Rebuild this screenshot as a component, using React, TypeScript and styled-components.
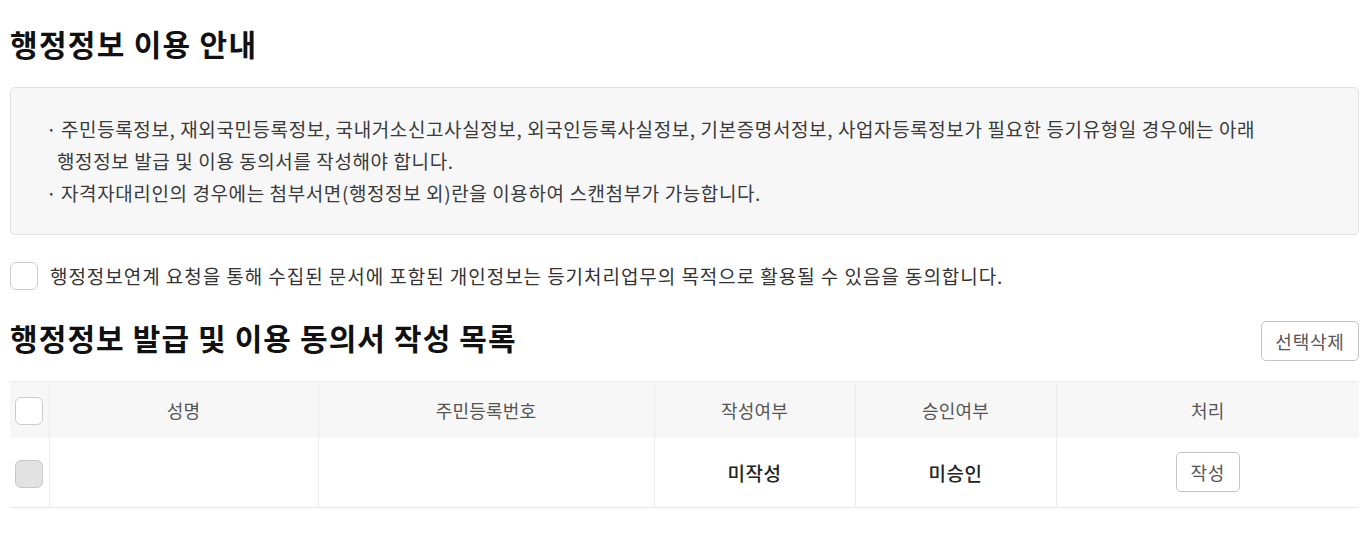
import React, { useState } from 'react'
import styled, { createGlobalStyle } from 'styled-components'

const GlobalStyle = createGlobalStyle`
  html, body {
    margin: 0;
    padding: 0;
    background: #ffffff;
  }
  body {
    font-family: 'Noto Sans CJK KR', 'Noto Sans', sans-serif;
    color: #333333;
  }
  * {
    box-sizing: border-box;
  }
`

const rows = [{ name: '', rrn: '', written: '미작성', approved: '미승인' }]

function App() {
  const [agree, setAgree] = useState(false)
  const [allChecked, setAllChecked] = useState(false)

  return (
    <Page>
      <GlobalStyle />
      <PageTitle>행정정보 이용 안내</PageTitle>
      <InfoBox>
        <InfoList>
          <InfoItem>
            주민등록정보, 재외국민등록정보, 국내거소신고사실정보, 외국인등록사실정보, 기본증명서정보, 사업자등록정보가 필요한 등기유형일 경우에는 아래
            <br />
            행정정보 발급 및 이용 동의서를 작성해야 합니다.
          </InfoItem>
          <InfoItem>자격자대리인의 경우에는 첨부서면(행정정보 외)란을 이용하여 스캔첨부가 가능합니다.</InfoItem>
        </InfoList>
      </InfoBox>

      <AgreeRow onClick={() => setAgree(!agree)}>
        <CheckBox $checked={agree} />
        <AgreeText>행정정보연계 요청을 통해 수집된 문서에 포함된 개인정보는 등기처리업무의 목적으로 활용될 수 있음을 동의합니다.</AgreeText>
      </AgreeRow>

      <SectionHeader>
        <SectionTitle>행정정보 발급 및 이용 동의서 작성 목록</SectionTitle>
        <OutlineButton $width={98}>선택삭제</OutlineButton>
      </SectionHeader>

      <Table>
        <colgroup>
          <col style={{ width: 39 }} />
          <col style={{ width: 269 }} />
          <col style={{ width: 336 }} />
          <col style={{ width: 201 }} />
          <col style={{ width: 201 }} />
          <col />
        </colgroup>
        <thead>
          <tr>
            <HeadCell>
              <CheckBox $checked={allChecked} onClick={() => setAllChecked(!allChecked)} />
            </HeadCell>
            <HeadCell>성명</HeadCell>
            <HeadCell>주민등록번호</HeadCell>
            <HeadCell>작성여부</HeadCell>
            <HeadCell>승인여부</HeadCell>
            <HeadCell>처리</HeadCell>
          </tr>
        </thead>
        <tbody>
          {rows.map((row, i) => (
            <tr key={i}>
              <BodyCell>
                <CheckBox $disabled />
              </BodyCell>
              <BodyCell>{row.name}</BodyCell>
              <BodyCell>{row.rrn}</BodyCell>
              <BodyCell $strong>{row.written}</BodyCell>
              <BodyCell $strong>{row.approved}</BodyCell>
              <BodyCell>
                <OutlineButton $width={64}>작성</OutlineButton>
              </BodyCell>
            </tr>
          ))}
        </tbody>
      </Table>
    </Page>
  )
}

export default App

const Page = styled.div`
  width: 100%;
  padding: 23px 13px 40px 10px;
  display: flex;
  flex-direction: column;
`

const PageTitle = styled.h2`
  margin: 0;
  font-size: 30px;
  line-height: 40px;
  font-weight: 700;
  color: #111111;
  letter-spacing: 1.3px;
`

const InfoBox = styled.div`
  margin-top: 24px;
  background: #f7f7f7;
  border: 1px solid #e2e2e2;
  border-radius: 5px;
  padding: 25px 20px 25px 35px;
`

const InfoList = styled.ul`
  margin: 0;
  padding: 0;
  list-style: none;
`

const InfoItem = styled.li`
  padding-left: 11px;
  font-size: 19px;
  line-height: 32px;
  color: #3a3a3a;
  letter-spacing: 0.6px;

  &::before {
    content: '·';
    display: inline-block;
    width: 15px;
    margin-left: -11px;
  }
`

const AgreeRow = styled.label`
  margin-top: 27px;
  display: flex;
  align-items: center;
  gap: 12px;
  cursor: pointer;
`

const CheckBox = styled.span<{ $checked?: boolean; $disabled?: boolean }>`
  display: inline-block;
  flex: none;
  width: 28px;
  height: 28px;
  border-radius: 6px;
  border: 1.5px solid ${({ $disabled }) => ($disabled ? '#c9c9c9' : '#cccccc')};
  background: ${({ $checked, $disabled }) => ($disabled ? '#e2e2e2' : $checked ? '#2f6fd6' : '#ffffff')};
  vertical-align: middle;
  cursor: ${({ $disabled }) => ($disabled ? 'default' : 'pointer')};
`

const AgreeText = styled.span`
  font-size: 19px;
  line-height: 28px;
  color: #333333;
  letter-spacing: 0.95px;
`

const SectionHeader = styled.div`
  margin-top: 31px;
  display: flex;
  justify-content: space-between;
  align-items: flex-start;
`

const SectionTitle = styled.h3`
  margin: 0;
  font-size: 30px;
  line-height: 32px;
  font-weight: 700;
  color: #111111;
  letter-spacing: 1.1px;
`

const OutlineButton = styled.button<{ $width: number }>`
  width: ${({ $width }) => $width}px;
  height: 40px;
  padding: 0;
  border: 1px solid #c4c4c4;
  border-radius: 5px;
  background: #ffffff;
  font-family: inherit;
  font-size: 18px;
  letter-spacing: 0.8px;
  color: #555555;
  cursor: pointer;
`

const Table = styled.table`
  margin-top: 20px;
  width: 100%;
  table-layout: fixed;
  border-collapse: collapse;
  border-top: 1px solid #ececec;
  border-bottom: 1px solid #e6e6e6;
`

const HeadCell = styled.th`
  height: 56px;
  padding: 0;
  background: #f7f7f7;
  font-size: 18px;
  font-weight: 400;
  letter-spacing: 0.2px;
  color: #555555;
  text-align: center;
  vertical-align: middle;

  & + & {
    border-left: 1px solid #ececec;
  }
`

const BodyCell = styled.td<{ $strong?: boolean }>`
  height: 70px;
  padding: 0;
  font-size: 19px;
  letter-spacing: 0.6px;
  font-weight: ${({ $strong }) => ($strong ? 500 : 400)};
  color: #222222;
  text-align: center;
  vertical-align: middle;

  & + & {
    border-left: 1px solid #ececec;
  }
`
